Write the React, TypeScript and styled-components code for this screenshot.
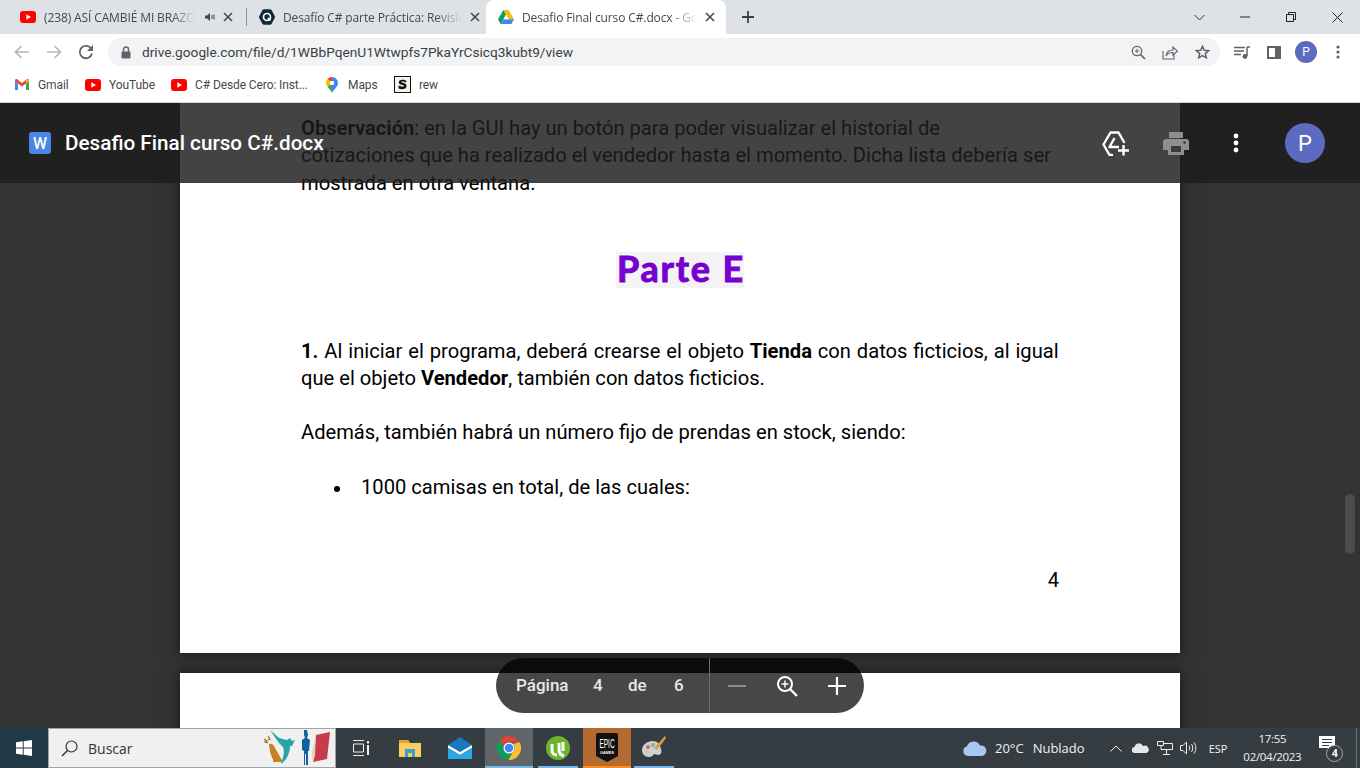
import React from "react";
import styled, { createGlobalStyle } from "styled-components";

const Global = createGlobalStyle`
  html, body { margin: 0; padding: 0; width: 1360px; height: 768px; overflow: hidden; background: #fff; }
  #root { width: 1360px; height: 768px; }
  * { box-sizing: border-box; }
`;
const Screen = styled.div`
  width: 1360px; height: 768px; display: flex; flex-direction: column;
  font-family: "Roboto", "Liberation Sans", sans-serif; overflow: hidden;
`;
const TabStrip = styled.div`
  height: 34px; background: #dee1e6; display: flex; align-items: stretch; padding-left: 8px; flex: none;
`;
const Tab = styled.div<{ $active?: boolean; $sep?: boolean; $w: number }>`
  width: ${p => p.$w}px; position: relative; display: flex; align-items: center; padding: 0 9px 0 12px; gap: 8px;
  background: ${p => (p.$active ? "#fff" : "transparent")};
  border-radius: ${p => (p.$active ? "8px 8px 0 0" : "0")};
  ${p => p.$sep ? `&::after { content: ""; position: absolute; right: 0; top: 8px; bottom: 8px; width: 1px; background: #8f9398; }` : ""}
`;
const TabTitle = styled.span<{ $w: number }>`
  width: ${p => p.$w}px; flex: none; overflow: hidden; white-space: nowrap; font: 400 12px "Open Sans", sans-serif; letter-spacing: -0.12px; color: #45494e;
  -webkit-mask-image: linear-gradient(to right, #000 85%, transparent);
  mask-image: linear-gradient(to right, #000 85%, transparent);
`;
const NewTab = styled.div`
  width: 44px; display: flex; align-items: center; justify-content: center;
`;
const Spacer = styled.div`flex: 1;`;
const WinBtn = styled.div`
  width: 46px; display: flex; align-items: center; justify-content: center;
`;
const Toolbar = styled.div`
  height: 34px; background: #fff; display: flex; align-items: center; flex: none; padding: 2px 0 0 6px;
`;
const NavBtn = styled.div`
  width: 32px; height: 28px; display: flex; align-items: center; justify-content: center;
`;
const Omnibox = styled.div`
  margin-left: 6px; width: 1112px; height: 28px; border-radius: 14px; background: #f1f3f4; display: flex; align-items: center; padding: 0 6px 0 12px; gap: 8px;
`;
const Url = styled.span`
  margin-left: 2px; font: 400 13.7px "Roboto", sans-serif; color: #3c4043; flex: 1; white-space: nowrap;
`;
const OmniIcon = styled.div`
  width: 24px; display: flex; justify-content: center;
`;
const ToolRight = styled.div`
  display: flex; align-items: center; margin-left: 2px;
`;
const ToolIcon = styled.div<{ $ml?: number }>`
  width: 32px; display: flex; justify-content: center; align-items: center; margin-left: ${p => p.$ml ?? 0}px;
`;
const Avatar = styled.div<{ $size: number; $font: number }>`
  width: ${p => p.$size}px; height: ${p => p.$size}px; border-radius: 50%; background: #5c6bc0; color: #fff;
  display: flex; align-items: center; justify-content: center; font: 400 ${p => p.$font}px "Roboto", sans-serif; flex: none;
`;
const Bookmarks = styled.div`
  height: 35px; background: #fff; border-bottom: 1px solid #d2d4d7; display: flex; align-items: center; flex: none; padding: 0 0 1px 15px;
`;
const Bookmark = styled.div<{ $w: number; $gap?: number }>`
  width: ${p => p.$w}px; flex: none; display: flex; align-items: center; gap: ${p => p.$gap ?? 8}px; font: 400 12px "Roboto", sans-serif; letter-spacing: -0.1px; color: #45494e; white-space: nowrap;
`;
const Viewer = styled.div`
  height: 625px; background: #333; position: relative; overflow: hidden; flex: none; display: flex; flex-direction: column; align-items: center;
`;
const Page = styled.div`
  width: 1000px; flex: none; background: #fff; color: #000; box-shadow: 0 0 14px rgba(0,0,0,.55);
  font: 400 20.15px/27.3px "Roboto", sans-serif; padding: 12px 121px 0;
`;
const FirstPage = styled(Page)`height: 550px; margin-bottom: 20px;`;
const NextPage = styled(Page)`height: 120px;`;
const Para = styled.div<{ $mt?: number }>`
  margin: ${p => p.$mt ?? 0}px 0 0;
`;
const Line = styled.div<{ $ws?: number }>`
  white-space: nowrap; word-spacing: ${p => p.$ws ?? 0}px;
`;
const Heading = styled.div`
  margin-top: 55px; display: flex; justify-content: center; height: 36px;
`;
const HeadingText = styled.span`
  display: block; background: #f3f3f3; color: #7700d0; font: 700 36px/32px "Lato", sans-serif; padding: 0 1px; width: 128px; height: 36px; white-space: nowrap;
  -webkit-text-stroke: 1px #7700d0; letter-spacing: 1.8px;
`;
const BulletList = styled.div`
  margin-top: 27.5px; padding-left: 33px;
`;
const BulletItem = styled.div`
  display: flex; align-items: center; gap: 21px;
`;
const Dot = styled.span`
  width: 6px; height: 6px; border-radius: 50%; background: #000; flex: none; margin-top: 3px;
`;
const PageNumber = styled.div`
  margin-top: 65px; text-align: right;
`;
const HeaderBar = styled.div`
  position: absolute; left: 0; right: 0; top: 0; height: 80px; background: rgba(29,29,29,.83); display: flex; align-items: center; padding: 0 35px 0 29px;
`;
const WordIcon = styled.div`
  width: 22px; height: 22px; border-radius: 3px; background: #4a86e8; color: #fff; display: flex; align-items: center; justify-content: center; font: 500 16px "Roboto", sans-serif; flex: none;
`;
const DocTitle = styled.div`
  margin-left: 14px; font: 500 20.7px "Roboto", sans-serif; color: #fff; white-space: nowrap; flex: 1;
`;
const HeadIcon = styled.div`
  width: 60px; display: flex; justify-content: center; align-items: center;
`;
const HeadAvatarWrap = styled.div`margin-left: 19px;`;
const Pager = styled.div`
  position: absolute; left: 496px; top: 555px; width: 368px; height: 55px; border-radius: 28px; background: rgba(0,0,0,.72); display: flex; align-items: center; color: #fff; font: 500 17px "Roboto", sans-serif;
`;
const PagerLeft = styled.div`
  width: 214px; height: 100%; border-right: 1px solid #6d6d6d; display: flex; align-items: center; padding: 0 0 2px 20px; color: #e8e8e8;
`;
const PagerWord = styled.span<{ $w: number }>`
  width: ${p => p.$w}px; flex: none;
`;
const PagerBtn = styled.div`
  width: 50px; display: flex; align-items: center; justify-content: center;
`;
const PagerBtns = styled.div`
  display: flex; margin-left: 2px;
`;
const ScrollThumb = styled.div`
  position: absolute; left: 1345px; top: 391px; width: 10px; height: 60px; border-radius: 5px; background: #4b4d4d;
`;
const Taskbar = styled.div`
  height: 40px; background: #363d42; flex: none; display: flex; align-items: stretch;
`;
const Start = styled.div`
  width: 48px; background: #1f3a44; display: flex; align-items: center; justify-content: center;
`;
const Search = styled.div`
  width: 288px; background: #f0f0f0; border: 1px solid #9ea3a6; display: flex; align-items: center; padding-left: 12px;
`;
const SearchText = styled.span`
  margin-left: 10px; font: 400 14px "Open Sans", sans-serif; color: #333; flex: 1;
`;
const TaskItem = styled.div<{ $w: number; $bg?: string; $line?: string; $lw?: number }>`
  width: ${p => p.$w}px; flex: none; background: ${p => p.$bg ?? "transparent"}; display: flex; align-items: center; justify-content: center; position: relative;
  ${p => p.$line ? `&::after { content: ""; position: absolute; bottom: 0; left: ${(p.$w - (p.$lw ?? p.$w)) / 2}px; width: ${p.$lw ?? p.$w}px; height: 2px; background: ${p.$line}; }` : ""}
`;
const Tray = styled.div`
  flex: 1; display: flex; align-items: center; color: #f1f1f1; font: 400 13px "Open Sans", sans-serif; padding-left: 287px;
`;
const TrayText = styled.span<{ $ml?: number; $size?: number }>`
  margin-left: ${p => p.$ml ?? 0}px; font-size: ${p => p.$size ?? 13}px; white-space: nowrap;
`;
const TrayIcon = styled.div<{ $w: number; $ml?: number }>`
  width: ${p => p.$w}px; margin-left: ${p => p.$ml ?? 0}px; display: flex; justify-content: center; flex: none;
`;
const Clock = styled.div`
  margin-left: 14px; width: 62px; text-align: center; font: 400 11.5px/18px "Open Sans", sans-serif; letter-spacing: -0.3px; white-space: nowrap; flex: none;
`;
const Notify = styled.div`
  margin-left: 13px; width: 32px; height: 30px; position: relative; flex: none;
`;
const NotifyGlyph = styled.svg`
  position: absolute; left: 3px; top: 3px;
`;
const NotifyBadge = styled.div`
  position: absolute; left: 10px; top: 12px; width: 17px; height: 17px; border-radius: 50%; border: 1px solid #aaa; background: #363d42; color: #fff; font: 700 10px/15px "Open Sans", sans-serif; text-align: center;
`;
const DesktopEdge = styled.div`
  margin-left: 8px; width: 1px; align-self: stretch; background: #6a6f72; flex: none;
`;
const Glyph = styled.svg<{ $ml?: number }>`
  flex: none; margin-left: ${p => p.$ml ?? 0}px;
`;

const YT = () => (
  <Glyph width="16" height="12" viewBox="0 0 16 12"><rect width="16" height="12" rx="3" fill="#f00" /><path d="M6.3 3.3 11 6 6.3 8.7z" fill="#fff" /></Glyph>
);
const Close = ({ c = "#45494e" }: { c?: string }) => (
  <Glyph width="10" height="10" viewBox="0 0 10 10"><path d="M1 1l8 8M9 1l-8 8" stroke={c} strokeWidth="1.6" /></Glyph>
);
const Drive = ({ s = 16 }: { s?: number }) => (
  <Glyph width={s} height={s * 0.9} viewBox="0 0 20 18">
    <path d="M6.7 0h6.6l6.7 11.6h-6.7z" fill="#fbbc04" />
    <path d="M6.7 0 0 11.6l3.3 5.8L10 5.8z" fill="#0f9d58" />
    <path d="M3.3 17.4h13.4l3.3-5.8H6.7z" fill="#4285f4" />
    <path d="M10 5.8 6.7 11.6h6.6z" fill="#fff" />
  </Glyph>
);
const Gmail = () => (
  <Glyph width="14" height="11" viewBox="0 0 14 11">
    <path d="M0 1.5V11h3V4.5z" fill="#4285f4" /><path d="M14 1.5V11h-3V4.5z" fill="#34a853" />
    <path d="M0 1.5C0 .2 1.4-.4 2.4.4L7 4l4.6-3.6c1-.8 2.4-.2 2.4 1.1L11 4.5 7 7.6 3 4.5z" fill="#ea4335" />
    <path d="M11 .9v3.6l3-2.5C14 .2 12.200 0 11 .9z" fill="#fbbc04" />
  </Glyph>
);
const MapsPin = () => (
  <Glyph width="12" height="16" viewBox="0 0 12 16">
    <path d="M6 0a6 6 0 0 1 6 6c0 4-4 6-6 10z" fill="#4285f4" />
    <path d="M6 0a6 6 0 0 0-4.500 2L6 6z" fill="#ea4335" />
    <path d="M1.500 2A6 6 0 0 0 0 6c0 1.500.7 2.800 1.500 3.800L6 6z" fill="#fbbc04" />
    <path d="M1.500 9.800C3 11.700 5 13.500 6 16V6z" fill="#34a853" />
    <circle cx="6" cy="6" r="2.200" fill="#fff" />
  </Glyph>
);
const RewIcon = () => (
  <Glyph width="17" height="17" viewBox="0 0 17 17">
    <rect x=".5" y=".5" width="16" height="16" fill="#f4f4ea" stroke="#111" />
    <path d="M12.500 5.200C11.800 4 10 3.700 8.500 3.700 6 3.700 4.800 4.800 4.800 6.300c0 3.400 5.300 2 5.300 3.800 0 .8-2.800.9-5.500-.5v3c2.500 1 7.900 1.200 7.900-2.800 0-3.400-5.200-2.400-5.200-4 0-.6 2.300-.6 4.700.6z" fill="#111" />
  </Glyph>
);

export default function App() {
  return (
    <Screen>
      <Global />
      <TabStrip>
        <Tab $w={239} $sep>
          <YT />
          <TabTitle $w={151}>(238) ASÍ CAMBIÉ MI BRAZO</TabTitle>
          <Glyph $ml={2} width="10" height="10" viewBox="0 0 10 10"><path d="M0 3.500h2L5 1v8L2 6.500H0z" fill="#45494e" /><path d="M7 3v4M9 2.500v5" stroke="#45494e" /></Glyph>
          <Close />
        </Tab>
        <Tab $w={239}>
          <Glyph width="16" height="16" viewBox="0 0 16 16">
            <path d="M5 .3h6a2 2 0 0 1 1.700 1l3 5.700a2 2 0 0 1 0 2l-3 5.700a2 2 0 0 1-1.700 1H5a2 2 0 0 1-1.700-1L.3 9a2 2 0 0 1 0-2l3-5.700A2 2 0 0 1 5 .3z" fill="#0e2a3f" /><circle cx="8" cy="8" r="3.500" fill="none" stroke="#fff" strokeWidth="1.700" /><path d="M9 9l2.500 2.500" stroke="#fff" strokeWidth="1.700" />
          </Glyph>
          <TabTitle $w={179}>Desafío C# parte Práctica: Revisión</TabTitle>
          <Close />
        </Tab>
        <Tab $w={240} $active>
          <Drive />
          <TabTitle $w={175}>Desafio Final curso C#.docx - Google Drive</TabTitle>
          <Close />
        </Tab>
        <NewTab>
          <svg width="12" height="12" viewBox="0 0 12 12"><path d="M6 0v12M0 6h12" stroke="#3c4043" strokeWidth="1.800" /></svg>
        </NewTab>
        <Spacer />
        <WinBtn><svg width="11" height="7" viewBox="0 0 11 7"><path d="M.5 1 5.500 6l5-5" fill="none" stroke="#333" /></svg></WinBtn>
        <WinBtn><svg width="10" height="2" viewBox="0 0 10 2"><path d="M0 1h10" stroke="#222" /></svg></WinBtn>
        <WinBtn><svg width="10" height="10" viewBox="0 0 10 10"><path d="M.5 2.500h7v7h-7zM2.500 2.500v-2h7v7h-2" fill="none" stroke="#222" /></svg></WinBtn>
        <WinBtn><svg width="11" height="11" viewBox="0 0 11 11"><path d="M.5.500l10 10M10.500.500l-10 10" stroke="#222" /></svg></WinBtn>
      </TabStrip>
      <Toolbar>
        <NavBtn><svg width="16" height="14" viewBox="0 0 16 14"><path d="M15 7H2M7.500 1 1.500 7l6 6" fill="none" stroke="#b5b7ba" strokeWidth="1.700" /></svg></NavBtn>
        <NavBtn><svg width="16" height="14" viewBox="0 0 16 14"><path d="M1 7h13M8.500 1l6 6-6 6" fill="none" stroke="#b5b7ba" strokeWidth="1.700" /></svg></NavBtn>
        <NavBtn><svg width="16" height="16" viewBox="0 0 16 16"><path d="M13.500 5.200A6.200 6.200 0 1 0 14 9.500" fill="none" stroke="#5f6368" strokeWidth="1.800" /><path d="M15 1v6H9z" fill="#5f6368" /></svg></NavBtn>
        <Omnibox>
          <Glyph width="12" height="13" viewBox="0 0 12 13"><path d="M3.500 6V3.500a2.500 2.500 0 0 1 5 0V6" fill="none" stroke="#5f6368" strokeWidth="1.500" /><rect x="1.500" y="5.500" width="9" height="7" rx="1" fill="#5f6368" /></Glyph>
          <Url>drive.google.com/file/d/1WBbPqenU1Wtwpfs7PkaYrCsicq3kubt9/view</Url>
          <OmniIcon><svg width="15" height="15" viewBox="0 0 15 15"><circle cx="6" cy="6" r="4.700" fill="none" stroke="#5f6368" strokeWidth="1.300" /><path d="M9.500 9.500 14 14" stroke="#5f6368" strokeWidth="1.700" /><path d="M6 3.800v4.400M3.800 6h4.400" stroke="#5f6368" /></svg></OmniIcon>
          <OmniIcon><svg width="16" height="15" viewBox="0 0 16 15"><path d="M1 6v8h11V10" fill="none" stroke="#5f6368" strokeWidth="1.100" /><path d="M4 11c.5-4 3.500-6 7-6V2l4.500 4.200L11 10V7.500C8 7.500 5.500 8.500 4 11z" fill="none" stroke="#5f6368" strokeWidth="1.100" /></svg></OmniIcon>
          <OmniIcon><svg width="15" height="14" viewBox="0 0 15 14"><path d="M7.500 1.300 9.300 5.300l4.300.4-3.300 2.900 1 4.200-3.800-2.200-3.800 2.200 1-4.200L1.400 5.700l4.300-.4z" fill="none" stroke="#5f6368" strokeWidth="1.500" /></svg></OmniIcon>
        </Omnibox>
        <ToolRight>
          <ToolIcon $ml={4}><svg width="16" height="13" viewBox="0 0 16 13"><path d="M0 1.500h11M0 5h10M0 8.500h7" stroke="#5f6368" strokeWidth="1.400" /><path d="M13 1v9" stroke="#5f6368" strokeWidth="1.500" /><path d="M13 1h3" stroke="#5f6368" strokeWidth="1.500" /><circle cx="11" cy="10.500" r="2.400" fill="#5f6368" /></svg></ToolIcon>
          <ToolIcon><svg width="14" height="13" viewBox="0 0 14 13"><rect width="14" height="13" fill="#5f6368" /><rect x="2" y="2" width="6" height="9" fill="#fff" /></svg></ToolIcon>
          <ToolIcon><Avatar $size={22} $font={12}>P</Avatar></ToolIcon>
          <ToolIcon><svg width="4" height="14" viewBox="0 0 4 14"><circle cx="2" cy="2" r="1.600" fill="#5f6368" /><circle cx="2" cy="7" r="1.600" fill="#5f6368" /><circle cx="2" cy="12" r="1.600" fill="#5f6368" /></svg></ToolIcon>
        </ToolRight>
      </Toolbar>
      <Bookmarks>
        <Bookmark $w={70} $gap={9}><Gmail />Gmail</Bookmark>
        <Bookmark $w={86}><YT />YouTube</Bookmark>
        <Bookmark $w={155}><YT />C# Desde Cero: Inst...</Bookmark>
        <Bookmark $w={68} $gap={10}><MapsPin />Maps</Bookmark>
        <Bookmark $w={60}><RewIcon />rew</Bookmark>
      </Bookmarks>
      <Viewer>
        <FirstPage>
          <Para>
            <Line><b>Observación</b>: en la GUI hay un botón para poder visualizar el historial de</Line>
            <Line>cotizaciones que ha realizado el vendedor hasta el momento. Dicha lista debería ser</Line>
            <Line>mostrada en otra ventana.</Line>
          </Para>
          <Heading><HeadingText>Parte E</HeadingText></Heading>
          <Para $mt={50}>
            <Line $ws={0.9}><b>1.</b> Al iniciar el programa, deberá crearse el objeto <b>Tienda</b> con datos ficticios, al igual</Line>
            <Line>que el objeto <b>Vendedor</b>, también con datos ficticios.</Line>
          </Para>
          <Para $mt={27}>Además, también habrá un número fijo de prendas en stock, siendo:</Para>
          <BulletList><BulletItem><Dot />1000 camisas en total, de las cuales:</BulletItem></BulletList>
          <PageNumber>4</PageNumber>
        </FirstPage>
        <NextPage />
        <HeaderBar>
          <WordIcon>W</WordIcon>
          <DocTitle>Desafio Final curso C#.docx</DocTitle>
          <HeadIcon>
            <svg width="28" height="25" viewBox="0 0 28 25"><path d="M10 24H7.500L1.500 13.500 8.500 1.500h8L22 11" fill="none" stroke="#fff" strokeWidth="2.400" strokeLinejoin="round" strokeLinecap="round" /><path d="M12.500 7 7.500 16h9.500" fill="none" stroke="#fff" strokeWidth="2.400" strokeLinejoin="round" /><path d="M21.500 14v10.500M16 19.500h11" stroke="#fff" strokeWidth="2.400" /></svg>
          </HeadIcon>
          <HeadIcon>
            <svg width="26" height="23" viewBox="0 0 26 23"><path d="M6 0h14v6H6z" fill="#8f8f8f" /><path d="M3 7h20a3 3 0 0 1 3 3v8h-5v5H5v-5H0v-8a3 3 0 0 1 3-3z" fill="#8f8f8f" /><rect x="8" y="14" width="10" height="6" fill="#3a3a3a" /><circle cx="21.500" cy="10.500" r="1.200" fill="#333" /></svg>
          </HeadIcon>
          <HeadIcon>
            <svg width="6" height="20" viewBox="0 0 6 20"><circle cx="3" cy="3" r="2.400" fill="#fff" /><circle cx="3" cy="10" r="2.400" fill="#fff" /><circle cx="3" cy="17" r="2.400" fill="#fff" /></svg>
          </HeadIcon>
          <HeadAvatarWrap><Avatar $size={40} $font={22}>P</Avatar></HeadAvatarWrap>
        </HeaderBar>
        <Pager>
          <PagerLeft>
            <PagerWord $w={77}>Página</PagerWord>
            <PagerWord $w={35}>4</PagerWord>
            <PagerWord $w={46}>de</PagerWord>
            <PagerWord $w={12}>6</PagerWord>
          </PagerLeft>
          <PagerBtns>
            <PagerBtn><svg width="18" height="2" viewBox="0 0 18 2"><path d="M0 1h18" stroke="#8d8d8d" strokeWidth="2" /></svg></PagerBtn>
            <PagerBtn><svg width="22" height="22" viewBox="0 0 22 22"><circle cx="9" cy="9" r="7" fill="none" stroke="#fff" strokeWidth="2" /><path d="M14 14l7 7" stroke="#fff" strokeWidth="2.400" /><path d="M9 5.500v7M5.500 9h7" stroke="#fff" strokeWidth="1.500" /></svg></PagerBtn>
            <PagerBtn><svg width="18" height="18" viewBox="0 0 18 18"><path d="M9 0v18M0 9h18" stroke="#fff" strokeWidth="2.200" /></svg></PagerBtn>
          </PagerBtns>
        </Pager>
        <ScrollThumb />
      </Viewer>
      <Taskbar>
        <Start>
          <svg width="16" height="16" viewBox="0 0 16 16"><path d="M0 2.300 6.800 1.300v6.200H0zM7.700 1.200 16 0v7.500H7.700zM0 8.500h6.800v6.200L0 13.700zM7.700 8.500H16V16l-8.300-1.200z" fill="#fff" /></svg>
        </Start>
        <Search>
          <svg width="17" height="17" viewBox="0 0 17 17"><circle cx="10.500" cy="6.500" r="5.500" fill="none" stroke="#333" strokeWidth="1.200" /><path d="M6.500 10.500 1 16" stroke="#333" strokeWidth="1.400" /></svg>
          <SearchText>Buscar</SearchText>
          <svg width="72" height="36" viewBox="0 0 72 36">
            <path d="M1 9l3 2-2 1 3 1M5 6l2 3-2 1" fill="none" stroke="#9a6a20" strokeWidth="1.200" />
            <path d="M6 14c3-1 5 1 6 4l8 14H10c1-2-1-4-2-7-1-4-2-7-2-11z" fill="#c77f22" />
            <path d="M7 0l9 8 8 2 3-2 2 3 3-1-3 6-2 0c0 6-3 14-9 18 2-6 4-12 2-17L16 13z" fill="#2aa3a3" />
            <path d="M41 0h3l1 5-1 3 3 2-1 11-1 0v14h-2V24h-1v11h-1V21l-2-1 0-10 3-2-1-3z" fill="#12619f" />
            <path d="M53 5l14-3-3 27-14 3z" fill="#c73c4b" />
            <path d="M53 5l-4 18 1 9 2-6z" fill="#e6cfae" />
          </svg>
        </Search>
        <TaskItem $w={49}>
          <svg width="16" height="16" viewBox="0 0 16 16"><path d="M0 .5h11M0 15.500h11M.5 4h10v8H.5z" fill="none" stroke="#eee" /><path d="M14 1h2v2.500h-2zM14 5h2v10h-2z" fill="#eee" /></svg>
        </TaskItem>
        <TaskItem $w={50}>
          <svg width="22" height="18" viewBox="0 0 22 18"><path d="M0 1h9l2 3h11v14H0z" fill="#f6cf5e" /><path d="M0 1h9l2 3H0z" fill="#e0a526" /><path d="M6 10h10v8H6z" fill="#3f9bd8" /><rect x="9" y="14" width="4" height="4" fill="#f6cf5e" /></svg>
        </TaskItem>
        <TaskItem $w={50}>
          <svg width="24" height="22" viewBox="0 0 24 22"><path d="M0 8 12 0l12 8-12 7z" fill="#1a78c2" /><path d="M0 8l12 7 12-7v3l-12 7-12-7z" fill="#fff" /><path d="M0 11l12 7 12-7v11H0z" fill="#29a8e8" /></svg>
        </TaskItem>
        <TaskItem $w={48} $bg="#5f6568" $line="#76b9ed">
          <svg width="24" height="24" viewBox="0 0 24 24">
            <path d="M12 0a12 12 0 0 1 10.400 6H12a6 6 0 0 0-5.700 4.100L2.500 4.400A12 12 0 0 1 12 0z" fill="#db4437" />
            <path d="M22.400 6A12 12 0 0 1 11.300 24l4.800-8.300A6 6 0 0 0 16.500 8z" fill="#fbc02d" />
            <path d="M2.500 4.400 7.300 12a5 5 0 0 0 7 4.500l-3 7.500A12 12 0 0 1 2.500 4.400z" fill="#0f9d58" />
            <circle cx="12" cy="12" r="5.500" fill="#fff" /><circle cx="12" cy="12" r="4.300" fill="#4285f4" />
          </svg>
        </TaskItem>
        <TaskItem $w={50} $line="#76b9ed" $lw={40}>
          <svg width="24" height="24" viewBox="0 0 24 24"><circle cx="12" cy="12" r="12" fill="#6fb52c" /><path d="M6 8v6c0 3 2 5 5 5M13 7v7c0 3 2 5 5 6M17 6v9" fill="none" stroke="#fff" strokeWidth="3" /></svg>
        </TaskItem>
        <TaskItem $w={48} $bg="#b46b32" $line="#ff8c1a">
          <svg width="22" height="30" viewBox="0 0 22 30">
            <path d="M2 0h18a2 2 0 0 1 2 2v21l-11 6-11-6V2a2 2 0 0 1 2-2z" fill="#111" />
            <text transform="translate(11 15) scale(1 2)" textAnchor="middle" fill="#fff" fontFamily="Liberation Sans, sans-serif" fontSize="6.500">EPIC</text>
            <text x="11" y="20.500" textAnchor="middle" fill="#fff" fontFamily="Liberation Sans, sans-serif" fontSize="3.800" fontWeight="700">GAMES</text>
          </svg>
        </TaskItem>
        <TaskItem $w={45} $line="#76b9ed" $lw={40}>
          <svg width="24" height="24" viewBox="0 0 24 24">
            <path d="M11 5C5 5 0 9 0 14c0 4 3 7 7 7 3 0 4-2 5-3l4 1c3 0 4-3 3-6-1-5-4-8-8-8z" fill="#c8d3dc" />
            <circle cx="6" cy="11" r="2" fill="#e85b5b" /><circle cx="11" cy="9" r="2" fill="#7cc05c" /><circle cx="5" cy="16" r="1.800" fill="#f2c14e" />
            <path d="M23 0l1 2-9 12-3-2z" fill="#e39a3b" />
          </svg>
        </TaskItem>
        <Tray>
          <TrayIcon $w={24}>
            <svg width="24" height="15" viewBox="0 0 24 15"><path d="M5 15a5 5 0 0 1-1-9.800A7 7 0 0 1 17 4.500 5.200 5.200 0 0 1 19 15z" fill="#a9c8ef" /></svg>
          </TrayIcon>
          <TrayText $ml={8}>20°C</TrayText>
          <TrayText $ml={9}>Nublado</TrayText>
          <TrayIcon $w={14} $ml={24}>
            <svg width="12" height="7" viewBox="0 0 12 7"><path d="M.5 6.500 6 1l5.500 5.500" fill="none" stroke="#eee" /></svg>
          </TrayIcon>
          <TrayIcon $w={18} $ml={9}>
            <svg width="17" height="10" viewBox="0 0 17 10"><path d="M3 10a3 3 0 0 1-.5-6A4.500 4.500 0 0 1 11 3a3.500 3.500 0 0 1 3.500 7z" fill="#e6e6e6" /></svg>
          </TrayIcon>
          <TrayIcon $w={18} $ml={6}>
            <svg width="16" height="15" viewBox="0 0 16 15"><path d="M.5.500h6v4h-6zM4 4.500v4h11.500v-6H7M9.500 8.500v5M6 13.500h7" fill="none" stroke="#eee" /></svg>
          </TrayIcon>
          <TrayIcon $w={18} $ml={6}>
            <svg width="17" height="14" viewBox="0 0 17 14"><path d="M.5 4.500h2.500L6.500 1v12L3 9.500H.5z" fill="none" stroke="#eee" /><path d="M9 4.500c1 1.500 1 3.500 0 5M11.500 3c1.700 2.500 1.700 5.500 0 8M14 1.500c2.500 3.500 2.500 7.500 0 11" fill="none" stroke="#eee" /></svg>
          </TrayIcon>
          <TrayText $ml={11} $size={11}>ESP</TrayText>
          <Clock>17:55<br />02/04/2023</Clock>
          <Notify>
            <NotifyGlyph width="18" height="16" viewBox="0 0 18 16"><path d="M0 0h16v12H0z" fill="#fff" /><path d="M3 3.500h10M3 6.500h10M3 9.500h7" stroke="#363d42" /></NotifyGlyph>
            <NotifyBadge>4</NotifyBadge>
          </Notify>
          <DesktopEdge />
        </Tray>
      </Taskbar>
    </Screen>
  );
}
